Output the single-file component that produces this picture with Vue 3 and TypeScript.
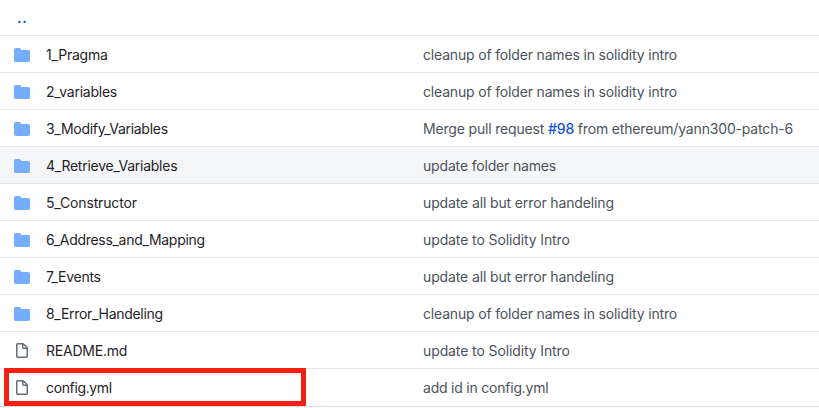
<script setup lang="ts">
interface Entry {
  kind: 'dir' | 'file'
  name: string
  message: string
  /** letter spacing of the name and of the message, in px */
  tracking: [number, number]
  issue?: string
  rest?: string
  hovered?: boolean
  marked?: boolean
}

const entries: Entry[] = [
  { kind: 'dir', name: '1_Pragma', message: 'cleanup of folder names in solidity intro', tracking: [-0.2, -0.17] },
  { kind: 'dir', name: '2_variables', message: 'cleanup of folder names in solidity intro', tracking: [-0.25, -0.17] },
  { kind: 'dir', name: '3_Modify_Variables', message: 'Merge pull request ', issue: '#98', rest: ' from ethereum/yann300-patch-6', tracking: [-0.28, -0.17] },
  { kind: 'dir', name: '4_Retrieve_Variables', message: 'update folder names', hovered: true, tracking: [-0.25, -0.17] },
  { kind: 'dir', name: '5_Constructor', message: 'update all but error handeling', tracking: [-0.16, -0.13] },
  { kind: 'dir', name: '6_Address_and_Mapping', message: 'update to Solidity Intro', tracking: [-0.3, -0.11] },
  { kind: 'dir', name: '7_Events', message: 'update all but error handeling', tracking: [-0.26, -0.13] },
  { kind: 'dir', name: '8_Error_Handeling', message: 'cleanup of folder names in solidity intro', tracking: [-0.3, -0.17] },
  { kind: 'file', name: 'README.md', message: 'update to Solidity Intro', tracking: [-0.22, -0.11] },
  { kind: 'file', name: 'config.yml', message: 'add id in config.yml', marked: true, tracking: [-0.36, -0.22] },
]
</script>

<template>
  <main class="files">
    <div class="parent"><a class="up">..</a></div>
    <div v-for="entry in entries" :key="entry.name" class="row" :class="{ hovered: entry.hovered }">
      <svg v-if="entry.kind === 'dir'" class="icon dir" viewBox="0 0 16 16" width="16" height="16">
        <path d="M1.75 1A1.75 1.75 0 000 2.75v10.5C0 14.216.784 15 1.75 15h12.5A1.75 1.75 0 0016 13.25v-8.5A1.75 1.75 0 0014.25 3h-6.5a.25.25 0 01-.2-.1l-.9-1.2c-.33-.44-.85-.7-1.4-.7h-3.5z" />
      </svg>
      <svg v-else class="icon file" viewBox="0 0 16 16" width="16" height="16">
        <path fill-rule="evenodd" d="M3.75 1.5a.25.25 0 00-.25.25v11.5c0 .138.112.25.25.25h8.5a.25.25 0 00.25-.25V6H9.75A1.75 1.75 0 018 4.25V1.5H3.75zm5.75.56v2.19c0 .138.112.25.25.25h2.19L9.5 2.06zM2 1.75C2 .784 2.784 0 3.75 0h5.086c.464 0 .909.184 1.237.513l3.414 3.414c.329.328.513.773.513 1.237v8.086A1.75 1.75 0 0112.25 15h-8.5A1.75 1.75 0 012 13.25V1.75z" />
      </svg>
      <span class="name" :style="{ letterSpacing: entry.tracking[0] + 'px' }">{{ entry.name }}</span>
      <span class="message" :style="{ letterSpacing: entry.tracking[1] + 'px' }">{{ entry.message }}<a v-if="entry.issue" class="issue">{{ entry.issue }}</a>{{ entry.rest }}</span>
      <div v-if="entry.marked" class="marker"></div>
    </div>
  </main>
</template>

<style>
body {
  background: #fff;
}
</style>

<style scoped>
.files {
  box-sizing: border-box;
  height: 407px;
  border-bottom: 1px solid #d8dce1;
  font-family: Inter, "Liberation Sans", sans-serif;
  font-size: 14px;
  line-height: 20px;
  color: #1f2328;
}
.parent {
  height: 35px;
  box-sizing: border-box;
  padding: 8px 0 0 17px;
}
.up {
  color: #0b55d6;
  font-weight: 600;
  letter-spacing: 0.7px;
}
.row {
  position: relative;
  box-sizing: border-box;
  display: grid;
  grid-template-columns: 16px 361px 1fr;
  column-gap: 16px;
  align-items: center;
  height: 37px;
  padding: 1px 0 0 14px;
  border-top: 1px solid #e4e6ea;
  white-space: pre;
}
.hovered {
  background: #f5f6f8;
}
.icon {
  display: block;
}
.dir {
  fill: #75adff;
}
.file {
  fill: #646c78;
}
.message {
  color: #4c535c;
}
.issue {
  color: #1453d4;
  font-weight: 500;
}
.marker {
  position: absolute;
  left: 3.5px;
  top: -1px;
  box-sizing: border-box;
  width: 302px;
  height: 38px;
  border: 5px solid #f51f12;
}
</style>
